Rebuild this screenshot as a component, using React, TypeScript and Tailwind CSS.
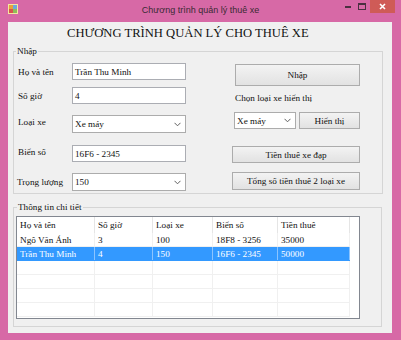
import React from "react";

const rows = [
  { name: "Ngô Văn Ánh", hours: "3", type: "100", plate: "18F8 - 3256", fee: "35000", selected: false },
  { name: "Trần Thu Minh", hours: "4", type: "150", plate: "16F6 - 2345", fee: "50000", selected: true },
];

function Chevron() {
  return (
    <svg width="7" height="5" viewBox="0 0 7 5" className="shrink-0">
      <path d="M0.5 0.8 L3.5 3.8 L6.5 0.8" fill="none" stroke="#606060" strokeWidth="1" />
    </svg>
  );
}

function TextBox({ value, className }: { value: string; className: string }) {
  return (
    <div className={`flex items-center border border-[#abadb3] bg-white pl-[2px] ${className}`}>
      {value}
    </div>
  );
}

function Combo({ value, className }: { value: string; className: string }) {
  return (
    <div className={`flex items-center justify-between border border-[#acacac] bg-white pl-[2px] pr-[4px] ${className}`}>
      <span>{value}</span>
      <Chevron />
    </div>
  );
}

function Button({ label, className }: { label: string; className: string }) {
  return (
    <div
      className={`flex items-center justify-center border border-[#acacac] bg-gradient-to-b from-[#f3f3f3] to-[#e2e2e2] ${className}`}
    >
      {label}
    </div>
  );
}

export default function App() {
  return (
    <div className="w-[401px] h-[340px] bg-[#d769a6] overflow-hidden font-['Liberation_Serif','Times_New_Roman',serif] text-[9.2px] leading-[12px] text-[#111]">
      {/* Title bar */}
      <div className="grid grid-cols-[1fr_auto_1fr] h-[22px] items-start">
        <div className="pl-[8px] pt-[4px]">
          <svg width="10" height="10" viewBox="0 0 10 10">
            <rect x="0" y="0" width="10" height="10" fill="#f4e6a0" />
            <rect x="1" y="1" width="4" height="4" fill="#e8a33c" />
            <rect x="5" y="1" width="4" height="4" fill="#6fa8dc" />
            <rect x="1" y="5" width="4" height="4" fill="#d9534f" />
            <rect x="5" y="5" width="4" height="4" fill="#8fbc5a" />
          </svg>
        </div>
        <div className="pt-[4px] font-['Liberation_Sans',Arial,sans-serif] text-[9px] leading-[12px] text-[#3a2a33]">
          Chương trình quản lý thuê xe
        </div>
        <div className="flex justify-end items-start pr-[6px]">
          <div className="flex items-center h-[13px] w-[14px] justify-center">
            <div className="w-[6px] h-[2px] bg-[#4a3040]" />
          </div>
          <div className="flex items-center h-[13px] w-[14px] justify-center">
            <div className="w-[8px] h-[7px] border border-[#4a3040] border-t-2" />
          </div>
          <div className="ml-[1px] flex items-center justify-center w-[25px] h-[13px] bg-[#cf5b57]">
            <svg width="7" height="7" viewBox="0 0 7 7">
              <path d="M1 1 L6 6 M6 1 L1 6" stroke="#ffffff" strokeWidth="1.6" />
            </svg>
          </div>
        </div>
      </div>

      {/* Client area */}
      <div className="ml-[8px] w-[384px] h-[311px] bg-[#f0f0f0] pt-[3px]">
        <div className="pl-[59px] text-[12.6px] leading-[16px] h-[16px]">CHƯƠNG TRÌNH QUẢN LÝ CHO THUÊ XE</div>

        {/* Nhập */}
        <fieldset className="mt-[4px] ml-[5px] w-[370px] border border-[#d5d5d5] pb-[2px]">
          <legend className="ml-[2px] px-[1px] leading-[12px]">Nhập</legend>
          <div className="flex pt-[6px]">
            <div className="flex flex-col pl-[4px]">
              <div className="flex items-center h-[17px]">
                <span className="w-[54px]">Họ và tên</span>
                <TextBox value="Trần Thu Minh" className="w-[114px] h-[17px]" />
              </div>
              <div className="flex items-center h-[17px] mt-[7px]">
                <span className="w-[54px]">Số giờ</span>
                <TextBox value="4" className="w-[114px] h-[17px]" />
              </div>
              <div className="flex items-center h-[18px] mt-[11px]">
                <span className="w-[54px] mb-[4px]">Loại xe</span>
                <Combo value="Xe máy" className="w-[114px] h-[18px]" />
              </div>
              <div className="flex items-center h-[17px] mt-[12px]">
                <span className="w-[54px] mb-[4px]">Biển số</span>
                <TextBox value="16F6 - 2345" className="w-[114px] h-[17px]" />
              </div>
              <div className="flex items-center h-[18px] mt-[11px]">
                <span className="w-[54px] -ml-[1px]">Trọng lượng</span>
                <Combo value="150" className="w-[114px] h-[18px] ml-[1px]" />
              </div>
            </div>

            <div className="flex flex-col ml-[46px] w-[128px]">
              <Button label="Nhập" className="ml-[3px] w-[125px] h-[22px] mt-[1px]" />
              <div className="ml-[3px] mt-[6px]">Chọn loại xe hiển thị</div>
              <div className="flex mt-[8px] ml-[2px]">
                <Combo value="Xe máy" className="w-[62px] h-[17px]" />
                <Button label="Hiển thị" className="ml-[3px] w-[61px] h-[17px]" />
              </div>
              <Button label="Tiền thuê xe đạp" className="w-[128px] h-[17px] mt-[17px]" />
              <Button label="Tổng số tiền thuê 2 loại xe" className="w-[128px] h-[18px] mt-[9px]" />
            </div>
          </div>
        </fieldset>

        {/* Thông tin chi tiết */}
        <fieldset className="mt-[7px] ml-[5px] w-[369px] border border-[#d5d5d5] pb-[7px]">
          <legend className="ml-[3px] px-[1px] leading-[12px]">Thông tin chi tiết</legend>
          <div className="mt-[3px] ml-[2px] w-[344px] h-[103px] border border-[#828790] bg-white overflow-hidden">
            <div className="grid grid-cols-[78px_58px_60px_65px_72px] w-[333px] h-[16px]">
              {["Họ và tên", "Số giờ", "Loại xe", "Biển số", "Tiền thuê"].map((h) => (
                <div key={h} className="flex items-center pl-[3px] border-r border-[#e5e5e5]">
                  {h}
                </div>
              ))}
            </div>
            {rows.map((r) => (
              <div
                key={r.name}
                className={`grid grid-cols-[78px_58px_60px_65px_72px] w-[333px] h-[14px] border-b ${
                  r.selected ? "bg-[#3399ff] text-white border-[#3399ff]" : "border-[#f0f0f0]"
                }`}
              >
                {[r.name, r.hours, r.type, r.plate, r.fee].map((c, i) => (
                  <div
                    key={i}
                    className={`flex items-center pl-[3px] border-r ${r.selected ? "border-[#8cc4ff]" : "border-[#f0f0f0]"}`}
                  >
                    {c}
                  </div>
                ))}
              </div>
            ))}
            {[0, 1, 2, 3].map((k) => (
              <div key={k} className="grid grid-cols-[78px_58px_60px_65px_72px] w-[333px] h-[14px] border-b border-[#f0f0f0]">
                {[0, 1, 2, 3, 4].map((i) => (
                  <div key={i} className="border-r border-[#f0f0f0]" />
                ))}
              </div>
            ))}
          </div>
        </fieldset>
      </div>
    </div>
  );
}
